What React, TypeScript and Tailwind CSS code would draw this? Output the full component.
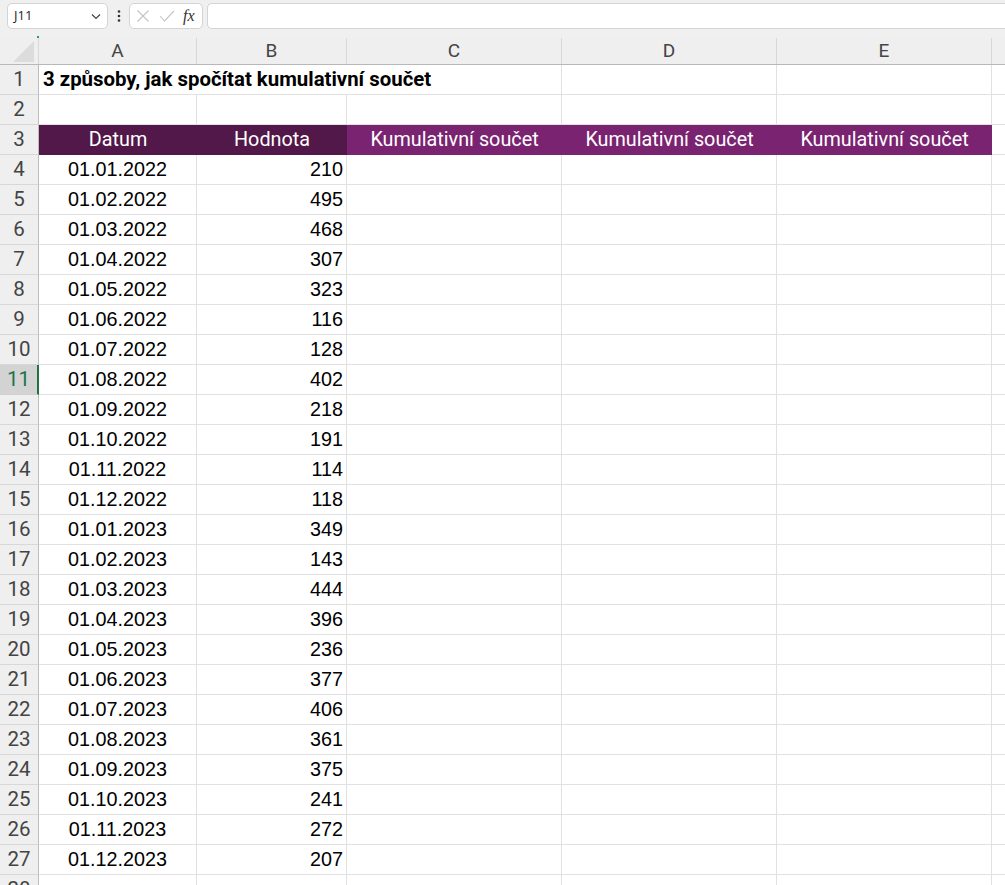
import React from "react";

const rows: [string, string][] = [
  ["01.01.2022", "210"],
  ["01.02.2022", "495"],
  ["01.03.2022", "468"],
  ["01.04.2022", "307"],
  ["01.05.2022", "323"],
  ["01.06.2022", "116"],
  ["01.07.2022", "128"],
  ["01.08.2022", "402"],
  ["01.09.2022", "218"],
  ["01.10.2022", "191"],
  ["01.11.2022", "114"],
  ["01.12.2022", "118"],
  ["01.01.2023", "349"],
  ["01.02.2023", "143"],
  ["01.03.2023", "444"],
  ["01.04.2023", "396"],
  ["01.05.2023", "236"],
  ["01.06.2023", "377"],
  ["01.07.2023", "406"],
  ["01.08.2023", "361"],
  ["01.09.2023", "375"],
  ["01.10.2023", "241"],
  ["01.11.2023", "272"],
  ["01.12.2023", "207"],
];

const font = { fontFamily: '"Liberation Sans", Arial, sans-serif' };
const narrow = { fontFamily: 'Roboto, "Liberation Sans", sans-serif' };

function RowHeader({ n, selected }: { n: number; selected?: boolean }) {
  return (
    <div
      className={
        selected
          ? "w-[39px] shrink-0 h-full flex items-center justify-center bg-[#d3d3d3] border-r-2 border-r-[#217346] border-b border-b-[#d0d0d0] text-[#217346] text-[20.5px]"
          : "w-[39px] shrink-0 h-full flex items-center justify-center bg-[#efefef] border-r border-r-[#bcbcbc] border-b border-b-[#d8d8d8] text-[#444] text-[20.5px]"
      }
      style={narrow}
    >
      {n}
    </div>
  );
}

function Cell({ w, children, className = "" }: { w: string; children?: React.ReactNode; className?: string }) {
  return (
    <div className={`${w} shrink-0 h-full border-r border-b border-[#e1e1e1] flex items-center ${className}`}>{children}</div>
  );
}

export default function App() {
  return (
    <div className="w-[1005px] h-[885px] overflow-hidden bg-white relative" style={font}>
      {/* formula bar */}
      <div className="h-[38px] bg-[#f0f0f0] flex items-start pt-[3px] pl-[7px] gap-0">
        <div className="w-[101px] h-[26px] bg-white border border-[#d4d4d4] rounded-[5px] flex items-center justify-between pl-[6px] pr-[5px]">
          <span className="text-[13px] text-[#222]" style={{ fontFamily: '"Open Sans", sans-serif' }}>J11</span>
          <svg width="12" height="12" viewBox="0 0 12 12">
            <path d="M2 4.5 L6 8.5 L10 4.5" stroke="#444" strokeWidth="1.2" fill="none" />
          </svg>
        </div>
        <div className="w-[21px] h-[26px] flex items-center justify-center">
          <svg width="4" height="14" viewBox="0 0 4 14">
            <circle cx="2" cy="2.5" r="1.3" fill="#333" />
            <circle cx="2" cy="7" r="1.3" fill="#333" />
            <circle cx="2" cy="11.5" r="1.3" fill="#333" />
          </svg>
        </div>
        <div className="w-[74px] h-[26px] bg-white border border-[#d4d4d4] rounded-[5px] flex items-center pl-[6px] gap-[9px]">
          <svg width="14" height="14" viewBox="0 0 14 14">
            <path d="M1.5 1.5 L12.5 12.5 M12.5 1.5 L1.5 12.5" stroke="#c4c4c4" strokeWidth="1.1" fill="none" />
          </svg>
          <svg width="16" height="14" viewBox="0 0 16 14">
            <path d="M1 7 L5.5 12 L15 2" stroke="#c4c4c4" strokeWidth="1.1" fill="none" />
          </svg>
          <span className="text-[16px] italic text-[#333] leading-none -ml-[1px]" style={{ fontFamily: '"Liberation Serif", serif' }}>
            fx
          </span>
        </div>
        <div className="ml-[4px] flex-1 h-[26px] bg-white border border-[#d4d4d4] rounded-l-[5px] border-r-0"></div>
      </div>

      {/* column headers */}
      <div className="h-[27px] flex bg-[#efefef] border-b border-[#b8b8b8] relative" style={narrow}>
        <div className="w-[39px] shrink-0 h-full border-r border-[#d8d8d8] flex items-end justify-end pr-[4px] pb-[2px]">
          <svg width="21" height="21" viewBox="0 0 21 21">
            <path d="M21 0 L21 21 L0 21 Z" fill="#dcdcdc" />
          </svg>
        </div>
        {[
          ["A", "w-[158px]"],
          ["B", "w-[150px]"],
          ["C", "w-[215px]"],
          ["D", "w-[215px]"],
          ["E", "w-[215px]"],
        ].map(([l, w]) => (
          <div key={l} className={`${w} shrink-0 h-full border-r border-[#d8d8d8] flex items-center justify-center text-[19px] text-[#444]`}>
            {l}
          </div>
        ))}
        <div className="flex-1"></div>
        <span className="absolute left-[37px] -top-[2px] w-[2px] h-[2px] bg-[#21a366]"></span>
      </div>

      {/* row 1 */}
      <div className="h-[30px] flex">
        <RowHeader n={1} />
        <div className="w-[308px] shrink-0 h-full border-b border-[#e1e1e1] flex items-center pl-[4px] relative overflow-visible">
          <span className="text-[20.4px] font-bold text-black whitespace-nowrap absolute left-[4px]" style={narrow}>
            3 způsoby, jak spočítat kumulativní součet
          </span>
        </div>
        <Cell w="w-[215px]" className="border-l-0" />
        <Cell w="w-[215px]" />
        <Cell w="w-[215px]" />
        <div className="flex-1 border-b border-[#e1e1e1]"></div>
      </div>

      {/* row 2 */}
      <div className="h-[30px] flex">
        <RowHeader n={2} />
        <Cell w="w-[158px]" />
        <Cell w="w-[150px]" />
        <Cell w="w-[215px]" />
        <Cell w="w-[215px]" />
        <Cell w="w-[215px]" />
        <div className="flex-1 border-b border-[#e1e1e1]"></div>
      </div>

      {/* row 3 headers */}
      <div className="h-[30px] flex text-white text-[19.8px]" style={narrow}>
        <RowHeader n={3} />
        <div className="w-[158px] shrink-0 h-full bg-[#521849] flex items-center justify-center">Datum</div>
        <div className="w-[150px] shrink-0 h-full bg-[#521849] flex items-center justify-center">Hodnota</div>
        <div className="w-[215px] shrink-0 h-full bg-[#7a2370] flex items-center justify-center">Kumulativní součet</div>
        <div className="w-[215px] shrink-0 h-full bg-[#7a2370] flex items-center justify-center">Kumulativní součet</div>
        <div className="w-[215px] shrink-0 h-full bg-[#7a2370] flex items-center justify-center">Kumulativní součet</div>
        <div className="flex-1 border-b border-[#e1e1e1]"></div>
      </div>

      {rows.map(([d, v], i) => (
        <div key={i} className="h-[30px] flex text-[19.8px] text-black">
          <RowHeader n={i + 4} selected={i + 4 === 11} />
          <Cell w="w-[158px]" className="justify-center">{d}</Cell>
          <Cell w="w-[150px]" className="justify-end pr-[3px]">{v}</Cell>
          <Cell w="w-[215px]" />
          <Cell w="w-[215px]" />
          <Cell w="w-[215px]" />
          <div className="flex-1 border-b border-[#e1e1e1]"></div>
        </div>
      ))}
      <div className="h-[30px] flex">
        <RowHeader n={28} />
        <Cell w="w-[158px]" />
        <Cell w="w-[150px]" />
        <Cell w="w-[215px]" />
        <Cell w="w-[215px]" />
        <Cell w="w-[215px]" />
        <div className="flex-1"></div>
      </div>
    </div>
  );
}
